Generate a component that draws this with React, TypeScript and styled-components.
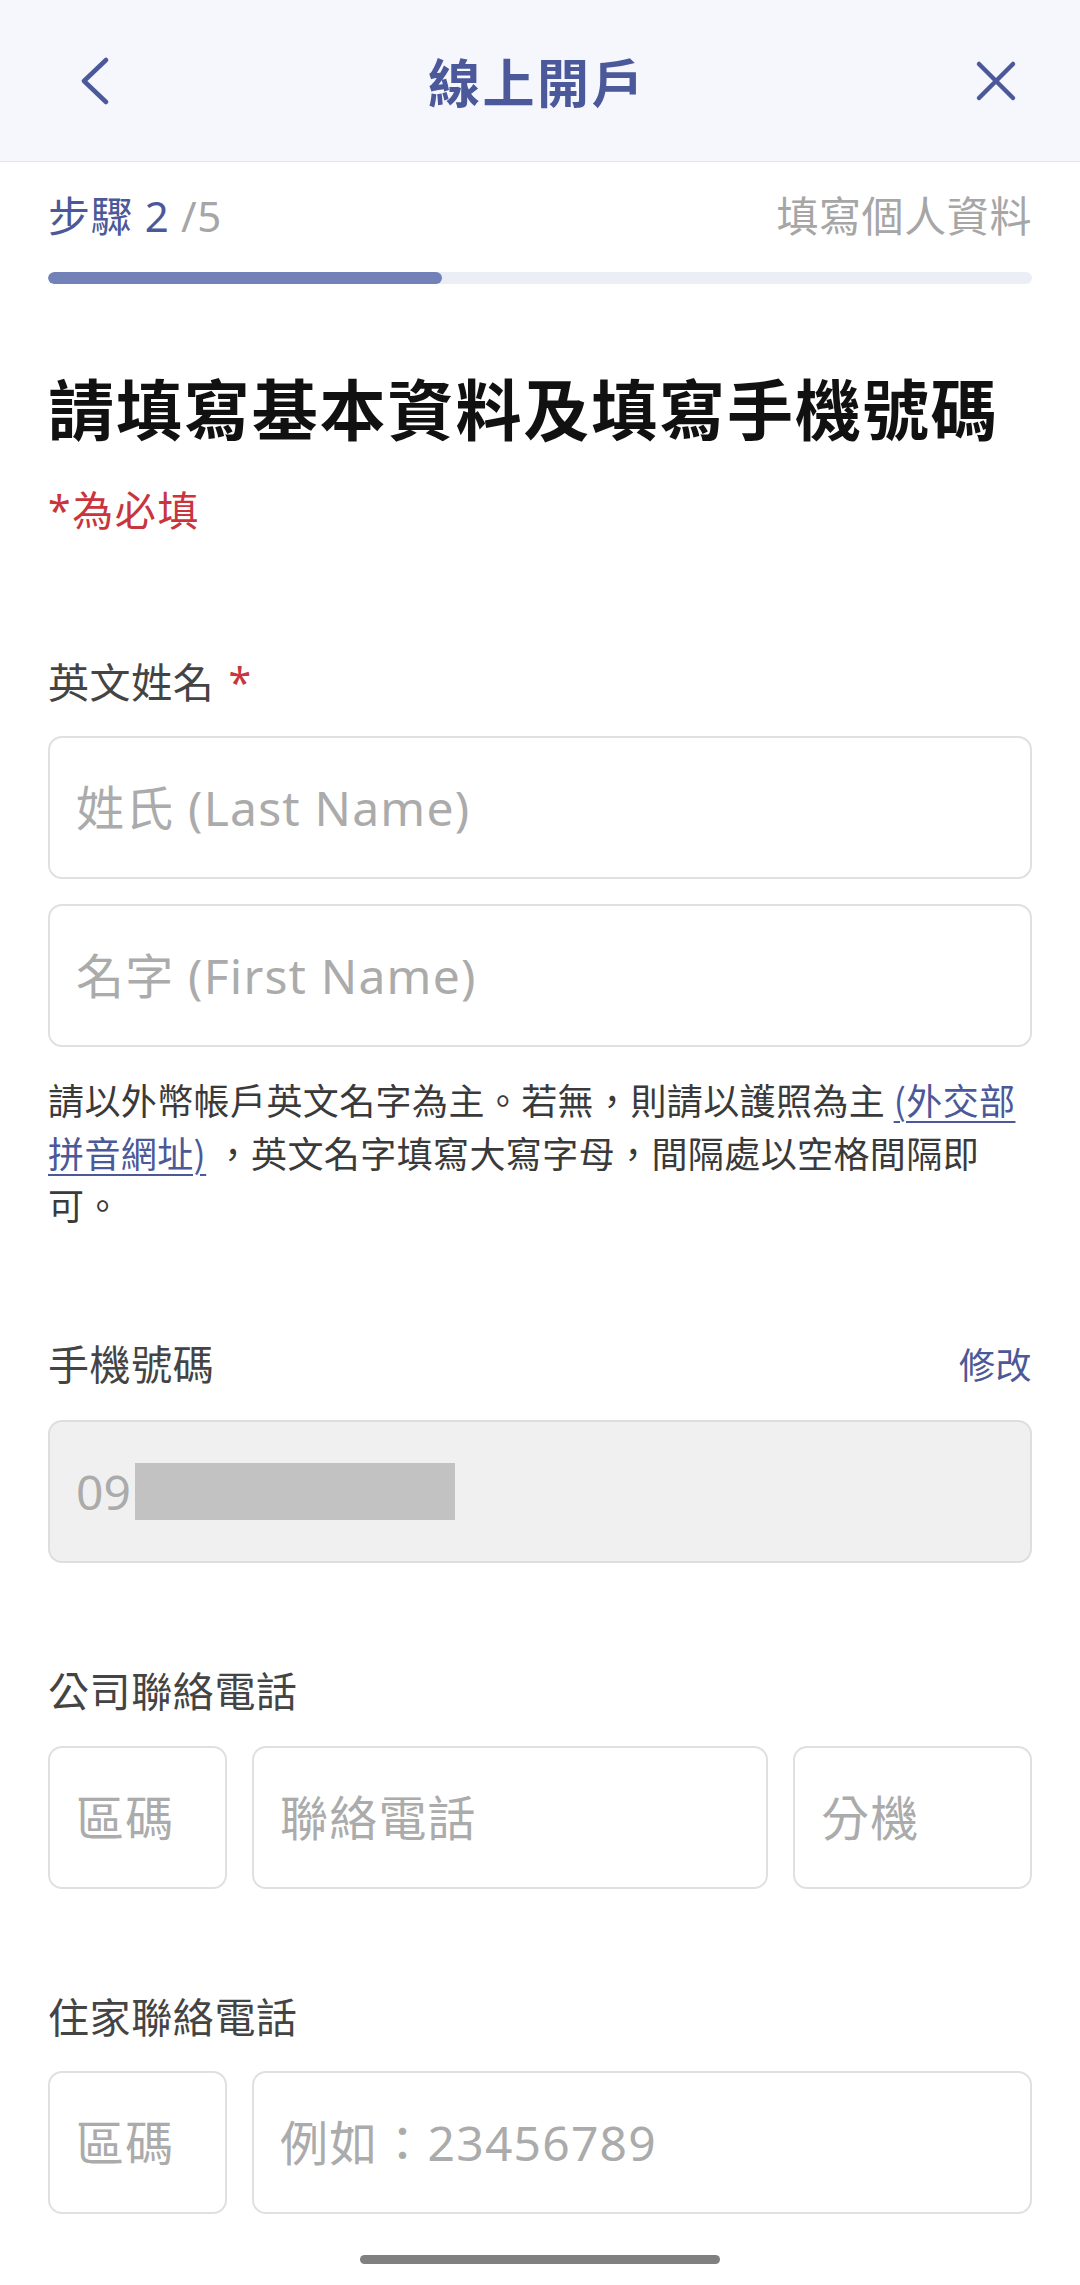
import React from "react";
import styled, { createGlobalStyle } from "styled-components";

const GlobalStyle = createGlobalStyle`
  html, body {
    margin: 0;
    padding: 0;
    background: #ffffff;
  }
  body {
    font-family: "Noto Sans", "Noto Sans CJK TC", sans-serif;
    -webkit-font-smoothing: antialiased;
  }
  * { box-sizing: border-box; }
`;

const NAVY = "#4b5899";

const Page = styled.div`
  width: 1080px;
  min-height: 2285px;
  background: #ffffff;
  display: flex;
  flex-direction: column;
`;

const Header = styled.header`
  height: 162px;
  background: #f5f7fc;
  border-bottom: 1px solid #e4e5ea;
  display: grid;
  grid-template-columns: 1fr auto 1fr;
  align-items: center;
  padding: 0 60px 0 54px;
`;

const IconButton = styled.button<{ $w: number; $align: "start" | "end" }>`
  width: ${(p) => p.$w}px;
  height: 48px;
  padding: 0;
  border: none;
  background: transparent;
  justify-self: ${(p) => p.$align};
  display: flex;
  cursor: pointer;
  svg { display: block; }
`;

const HeaderTitle = styled.h1`
  margin: 0;
  font-family: "Noto Sans CJK TC", sans-serif;
  font-size: 52px;
  font-weight: 700;
  letter-spacing: 2.5px;
  color: ${NAVY};
  line-height: 1;
`;

const Content = styled.main`
  padding: 0 48px;
  display: flex;
  flex-direction: column;
`;

const StepRow = styled.div`
  margin-top: 26px;
  height: 56px;
  display: flex;
  align-items: center;
  justify-content: space-between;
  font-size: 42px;
  letter-spacing: 0.6px;
  line-height: 56px;
`;

const StepLabel = styled.span`
  color: ${NAVY};
`;

const StepMuted = styled.span`
  color: #a6a6a6;
`;

const Progress = styled.div`
  margin-top: 28px;
  height: 12px;
  border-radius: 6px;
  background: #eceef6;
  overflow: hidden;
`;

const ProgressFill = styled.div`
  height: 100%;
  background: #7282b9;
  border-radius: 6px;
`;

const Title = styled.h2`
  margin: 77px 0 0;
  font-family: "Noto Sans CJK TC", sans-serif;
  font-size: 66px;
  font-weight: 700;
  letter-spacing: 1.9px;
  line-height: 90px;
  color: #111111;
`;

const Required = styled.div`
  margin-top: 31px;
  font-size: 41px;
  letter-spacing: 1.6px;
  line-height: 56px;
  color: #c9343d;
`;

const Field = styled.section<{ $top: number }>`
  margin-top: ${(p) => p.$top}px;
  display: flex;
  flex-direction: column;
`;

const LabelRow = styled.div<{ $gap: number }>`
  height: 56px;
  margin-bottom: ${(p) => p.$gap}px;
  display: flex;
  align-items: center;
  justify-content: space-between;
`;

const Label = styled.label`
  font-size: 41px;
  letter-spacing: 0.6px;
  line-height: 56px;
  color: #444444;
`;

const Star = styled.span`
  color: #c9343d;
  margin-left: 14px;
`;

const EditLink = styled.a`
  font-size: 36px;
  letter-spacing: 0.5px;
  color: ${NAVY};
  text-decoration: none;
`;

const Stack = styled.div`
  display: flex;
  flex-direction: column;
  gap: 25px;
`;

const Row = styled.div<{ $cols: string }>`
  display: grid;
  grid-template-columns: ${(p) => p.$cols};
  gap: 25px;
`;

const TextInput = styled.input`
  width: 100%;
  height: 143px;
  border: 2px solid #e0e0e0;
  border-radius: 14px;
  background: #ffffff;
  padding: 0 26px;
  font-family: "Noto Sans", "Noto Sans CJK TC", sans-serif;
  font-size: 48px;
  letter-spacing: 1.2px;
  color: #333333;
  outline: none;
  &::placeholder {
    color: #ababab;
  }
`;

const LockedInput = styled.div`
  height: 143px;
  border: 2px solid #dedede;
  border-radius: 14px;
  background: #f0f0f0;
  padding: 0 26px;
  display: flex;
  align-items: center;
  font-size: 48px;
  color: #ababab;
`;

const Redacted = styled.span`
  display: inline-block;
  width: 320px;
  height: 57px;
  margin-left: 4px;
  background: #c2c2c2;
`;

const Hint = styled.p`
  margin: 26px 0 0;
  font-family: "Noto Sans CJK TC", sans-serif;
  font-size: 36px;
  letter-spacing: 0.4px;
  line-height: 52.5px;
  color: #3a3a3a;
`;

const HintLink = styled.a`
  color: ${NAVY};
  text-decoration: underline;
  text-decoration-thickness: 2px;
  text-underline-offset: 6px;
`;

const HomeIndicator = styled.div`
  margin: 41px auto 0;
  width: 360px;
  height: 9px;
  border-radius: 5px;
  background: #808080;
`;

const ChevronLeft = () => (
  <svg width="64" height="48" viewBox="0 0 64 48" fill="none">
    <path
      d="M52 3 L30 24 L52 45"
      stroke={NAVY}
      strokeWidth="4.5"
      strokeLinecap="round"
      strokeLinejoin="round"
    />
  </svg>
);

const CloseIcon = () => (
  <svg width="48" height="48" viewBox="0 0 48 48" fill="none">
    <path
      d="M7 7 L41 41 M41 7 L7 41"
      stroke={NAVY}
      strokeWidth="4.5"
      strokeLinecap="round"
    />
  </svg>
);

export default function App() {
  const step = 2;
  const total = 5;
  return (
    <>
      <GlobalStyle />
      <Page>
        <Header>
          <IconButton $w={64} $align="start" aria-label="返回">
            <ChevronLeft />
          </IconButton>
          <HeaderTitle>線上開戶</HeaderTitle>
          <IconButton $w={48} $align="end" aria-label="關閉">
            <CloseIcon />
          </IconButton>
        </Header>
        <Content>
          <StepRow>
            <span>
              <StepLabel>步驟 {step} </StepLabel>
              <StepMuted>/{total}</StepMuted>
            </span>
            <StepMuted>填寫個人資料</StepMuted>
          </StepRow>
          <Progress>
            <ProgressFill style={{ width: `${(step / total) * 100}%` }} />
          </Progress>
          <Title>請填寫基本資料及填寫手機號碼</Title>
          <Required>*為必填</Required>

          <Field $top={116}>
            <LabelRow $gap={26}>
              <Label>
                英文姓名<Star>*</Star>
              </Label>
            </LabelRow>
            <Stack>
              <TextInput placeholder="姓氏 (Last Name)" />
              <TextInput placeholder="名字 (First Name)" />
            </Stack>
            <Hint>
              請以外幣帳戶英文名字為主。若無，則請以護照為主{" "}
              <HintLink href="#">(外交部拼音網址)</HintLink>{" "}
              ，英文名字填寫大寫字母，間隔處以空格間隔即可。
            </Hint>
          </Field>

          <Field $top={105}>
            <LabelRow $gap={28}>
              <Label>手機號碼</Label>
              <EditLink href="#">修改</EditLink>
            </LabelRow>
            <LockedInput>
              09
              <Redacted />
            </LockedInput>
          </Field>

          <Field $top={100}>
            <LabelRow $gap={27}>
              <Label>公司聯絡電話</Label>
            </LabelRow>
            <Row $cols="179px 1fr 239px">
              <TextInput placeholder="區碼" />
              <TextInput placeholder="聯絡電話" />
              <TextInput placeholder="分機" />
            </Row>
          </Field>

          <Field $top={100}>
            <LabelRow $gap={26}>
              <Label>住家聯絡電話</Label>
            </LabelRow>
            <Row $cols="179px 1fr">
              <TextInput placeholder="區碼" />
              <TextInput placeholder="例如：23456789" />
            </Row>
          </Field>
        </Content>
        <HomeIndicator />
      </Page>
    </>
  );
}
